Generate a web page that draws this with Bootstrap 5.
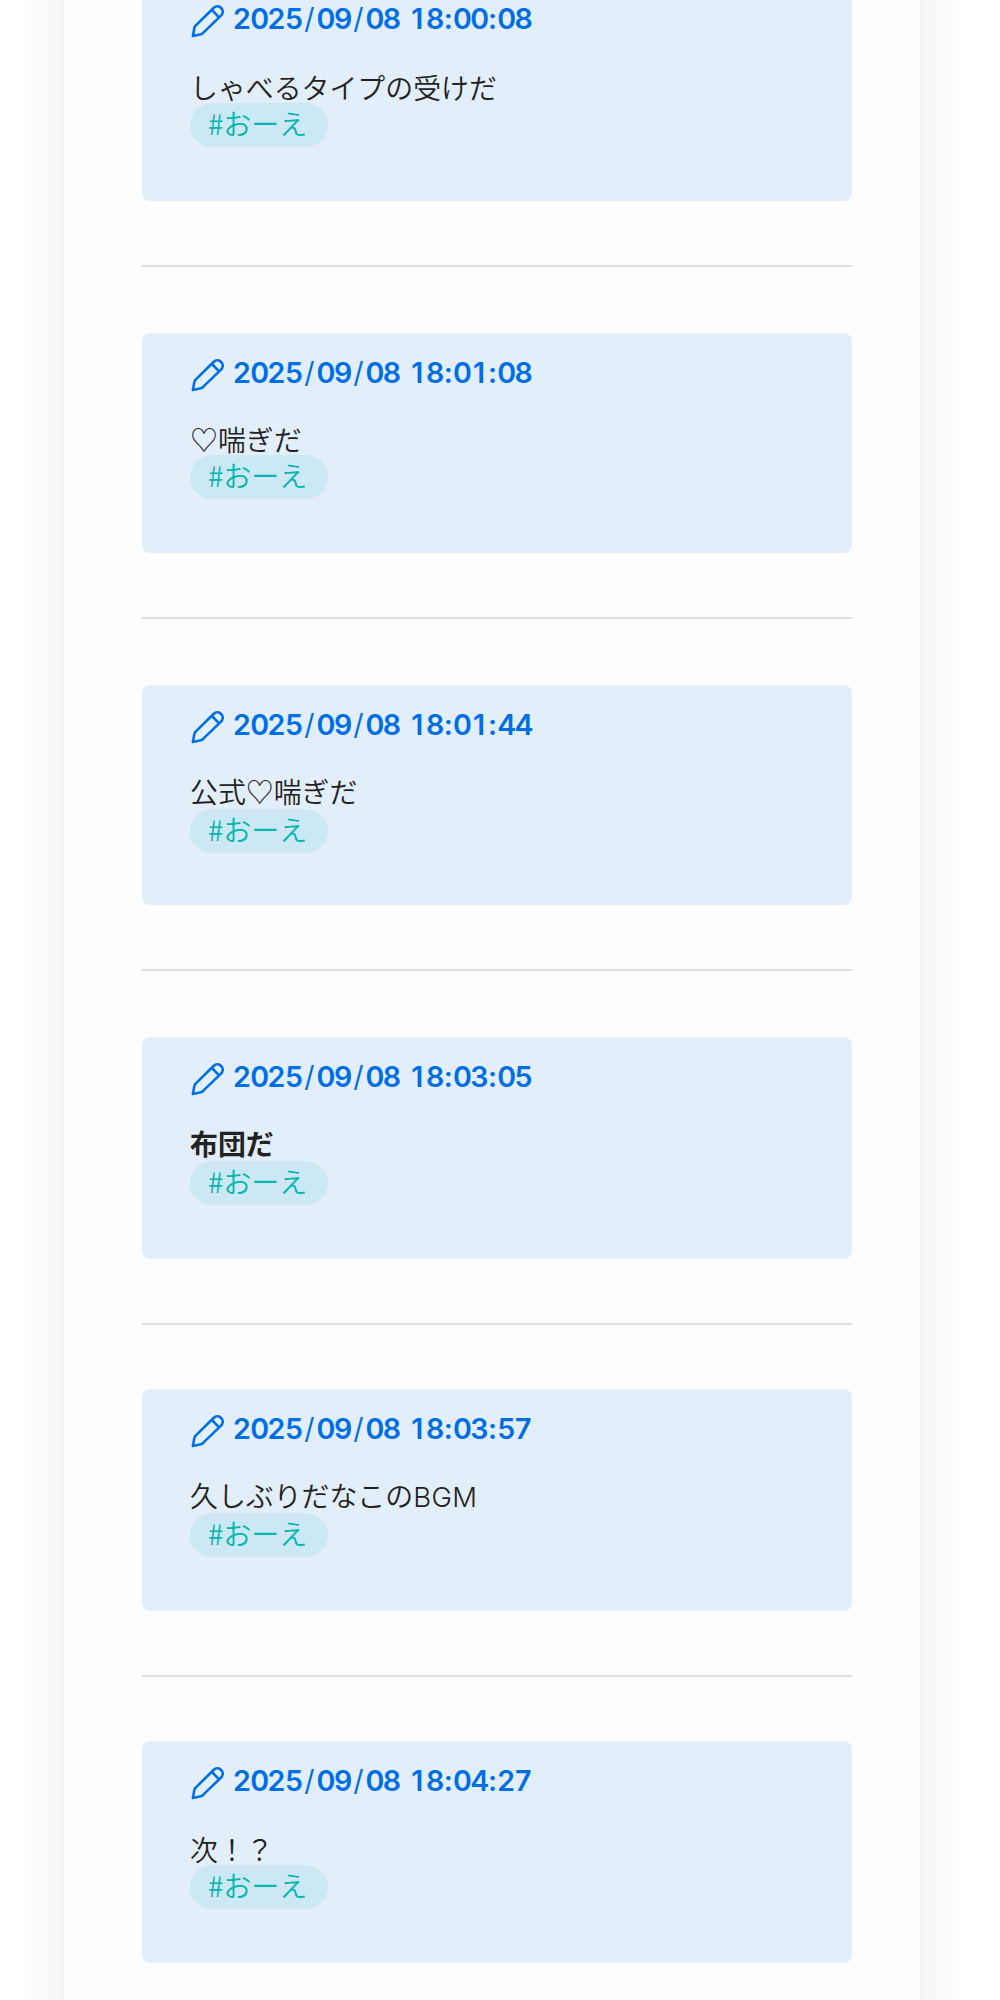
<!DOCTYPE html>
<html lang="ja">
<head>
<meta charset="utf-8">
<meta name="viewport" content="width=device-width, initial-scale=1">
<title>おーえ</title>
<link href="https://cdn.jsdelivr.net/npm/bootstrap@5.3.0/dist/css/bootstrap.min.css" rel="stylesheet">
<style>
html, body { height: 2000px; overflow: hidden; }
body { background: #fff; color: #222; font-family: "Noto Sans CJK JP", sans-serif; }
.page-panel { width: 856px; height: 2200px; margin: -100px 0 0 64px; padding: 100px 68px 0 78px; background: #fdfdfd; box-shadow: 0 0 46px rgba(0,0,0,.1); }
.feed { height: 2000px; overflow: hidden; }
.entry { flex: none; height: 220px; padding: 20px 48px 0; background: #e2eefa; border-radius: 8px; --text-gap: 26px; --tag-gap: -2px; }
.entry-first { height: 222px; margin-top: -21px; --text-gap: 28px; --tag-gap: -4px; }
.entry-tight { --tag-gap: -4px; }
.entry-tall { height: 222px; }
.entry-last { --text-gap: 28px; --tag-gap: -4px; }
.stamp { height: 40px; line-height: 40px; color: #006ee3; font-family: Inter, sans-serif; font-weight: 600; font-size: 28.6px; white-space: nowrap; }
.stamp svg { width: 34px; height: 34px; margin: 4px 9px 0 0; flex: none; }
.stamp time { display: flex; }
.stamp i { flex: none; width: 17.3px; text-align: center; font-style: normal; }
.stamp i.slash { width: 14.4px; font-weight: 400; }
.stamp i.colon { width: 9.7px; }
.stamp i.space { width: 8.6px; }
.said { height: 40px; line-height: 40px; margin-top: var(--text-gap); font-size: 27.9px; font-weight: 350; }
.said b { font-weight: 700; }
.latin { font-family: Inter, sans-serif; font-weight: 300; font-size: 27.5px; letter-spacing: .4px; }
.tag-pill { display: block; width: 138px; height: 44px; line-height: 40px; margin-top: var(--tag-gap); padding-left: 18px; border-radius: 22px; background: #cce8f4; color: #05b5b0; font-size: 28px; font-weight: 350; text-decoration: none; white-space: nowrap; }
.rule { flex: none; height: 2px; margin: 64px 0 66px; border: 0; opacity: 1; background: #dfdfdf; }
.entry-tall + .rule { margin-bottom: 64px; }
</style>
</head>
<body>
<svg class="d-none" xmlns="http://www.w3.org/2000/svg">
<symbol id="pencil" viewBox="0 0 34 34"><g fill="none" stroke="currentColor" stroke-width="2.6" stroke-linejoin="round" stroke-linecap="round"><path d="M2.9 31.9 4.4 23.9Q4.6 22.7 5.4 21.9L23.8 3.8C28.5-.6 36.2 6.2 31 11.6L12.6 29.4Q12 30 11 30.2Z"/><path d="M22.1 6.2 28.8 13.1"/></g></symbol>
</svg>
<main class="page-panel">
<div class="feed d-flex flex-column">
<article class="entry entry-first"><div class="stamp d-flex align-items-center"><svg><use href="#pencil"/></svg><time>2025/09/08 18:00:08</time></div><div class="said">しゃべるタイプの受けだ</div><a class="tag-pill">#おーえ</a></article>
<hr class="rule">
<article class="entry entry-tight"><div class="stamp d-flex align-items-center"><svg><use href="#pencil"/></svg><time>2025/09/08 18:01:08</time></div><div class="said">♡喘ぎだ</div><a class="tag-pill">#おーえ</a></article>
<hr class="rule">
<article class="entry"><div class="stamp d-flex align-items-center"><svg><use href="#pencil"/></svg><time>2025/09/08 18:01:44</time></div><div class="said">公式♡喘ぎだ</div><a class="tag-pill">#おーえ</a></article>
<hr class="rule">
<article class="entry entry-tall"><div class="stamp d-flex align-items-center"><svg><use href="#pencil"/></svg><time>2025/09/08 18:03:05</time></div><div class="said"><b>布団だ</b></div><a class="tag-pill">#おーえ</a></article>
<hr class="rule">
<article class="entry entry-tall"><div class="stamp d-flex align-items-center"><svg><use href="#pencil"/></svg><time>2025/09/08 18:03:57</time></div><div class="said">久しぶりだなこの<span class="latin">BGM</span></div><a class="tag-pill">#おーえ</a></article>
<hr class="rule">
<article class="entry entry-tall entry-last"><div class="stamp d-flex align-items-center"><svg><use href="#pencil"/></svg><time>2025/09/08 18:04:27</time></div><div class="said">次！？</div><a class="tag-pill">#おーえ</a></article>
</div>
</main>
<script src="https://cdn.jsdelivr.net/npm/bootstrap@5.3.0/dist/js/bootstrap.bundle.min.js"></script>
<script>
// Set the timestamp on fixed character widths so all entries line up.
const kinds = { '/': 'slash', ':': 'colon', ' ': 'space' };
document.querySelectorAll('.stamp time').forEach(t => {
  t.innerHTML = [...t.textContent].map(c => `<i class="${kinds[c] || ''}">${c}</i>`).join('');
});
</script>
</body>
</html>
